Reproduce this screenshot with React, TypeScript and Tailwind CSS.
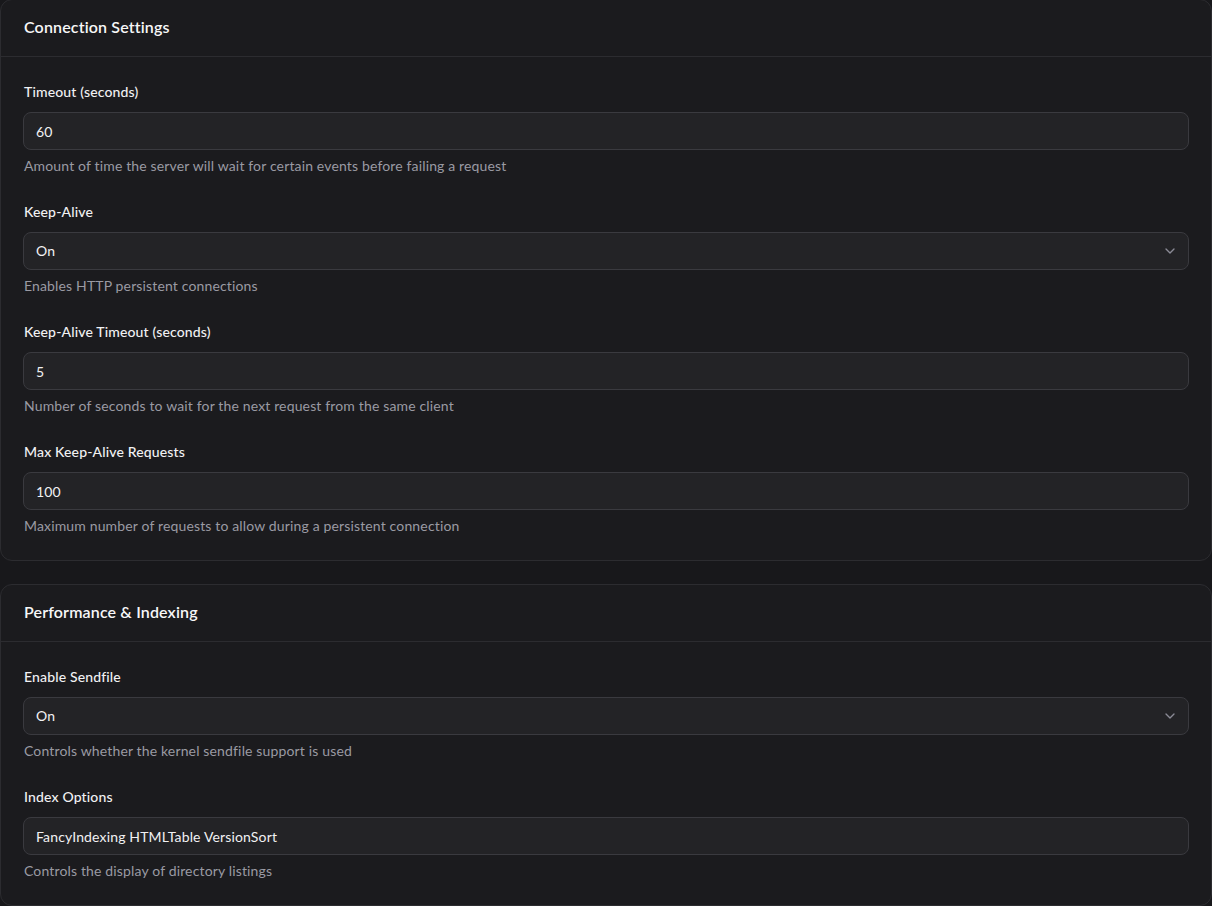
import { ChevronDown } from "lucide-react";

type Field = {
  label: string;
  value: string;
  help: string;
  select?: boolean;
};

const sections: { title: string; fields: Field[] }[] = [
  {
    title: "Connection Settings",
    fields: [
      {
        label: "Timeout (seconds)",
        value: "60",
        help: "Amount of time the server will wait for certain events before failing a request",
      },
      {
        label: "Keep-Alive",
        value: "On",
        help: "Enables HTTP persistent connections",
        select: true,
      },
      {
        label: "Keep-Alive Timeout (seconds)",
        value: "5",
        help: "Number of seconds to wait for the next request from the same client",
      },
      {
        label: "Max Keep-Alive Requests",
        value: "100",
        help: "Maximum number of requests to allow during a persistent connection",
      },
    ],
  },
  {
    title: "Performance & Indexing",
    fields: [
      {
        label: "Enable Sendfile",
        value: "On",
        help: "Controls whether the kernel sendfile support is used",
        select: true,
      },
      {
        label: "Index Options",
        value: "FancyIndexing HTMLTable VersionSort",
        help: "Controls the display of directory listings",
      },
    ],
  },
];

function FieldRow({ field }: { field: Field }) {
  return (
    <div className="flex flex-col">
      <label className="pl-px text-sm leading-5 font-medium text-[#f1f1f3]">
        {field.label}
      </label>
      {field.select ? (
        <div className="mt-2.5 flex h-[38px] items-center justify-between rounded-lg border border-[#3a3a3f] bg-[#232326] pl-3 pr-2.5">
          <span className="text-sm text-[#f1f1f3]">{field.value}</span>
          <ChevronDown className="h-4 w-4 text-[#8b8b96]" strokeWidth={2} />
        </div>
      ) : (
        <input
          readOnly
          value={field.value}
          className="mt-2.5 h-[38px] rounded-lg border border-[#3a3a3f] bg-[#232326] px-3 text-sm tracking-[0.15px] text-[#f1f1f3] outline-none"
        />
      )}
      <p className="mt-1.5 pl-px text-sm leading-5 text-[#9a9aa3]">
        {field.help}
      </p>
    </div>
  );
}

export default function App() {
  return (
    <div
      className="min-h-screen bg-[#18181b] pb-6 tracking-[0.15px]"
      style={{ fontFamily: "Lato, 'Noto Sans', sans-serif" }}
    >
      {/* cards sit one pixel above the viewport top, as in the capture */}
      <div className="-mt-px flex flex-col gap-[23px]">
        {sections.map((section) => (
          <div
            key={section.title}
            className="rounded-xl border border-[#2c2c30] bg-[#1b1b1e]"
          >
            <div className="flex h-[57px] items-center border-b border-[#2c2c30] px-[23px] pb-0.5">
              <h2 className="text-base font-semibold text-[#f7f7f8]">
                {section.title}
              </h2>
            </div>
            <div className="flex flex-col gap-[26px] px-[22px] pt-[25px] pb-6">
              {section.fields.map((field) => (
                <FieldRow key={field.label} field={field} />
              ))}
            </div>
          </div>
        ))}
      </div>
    </div>
  );
}
